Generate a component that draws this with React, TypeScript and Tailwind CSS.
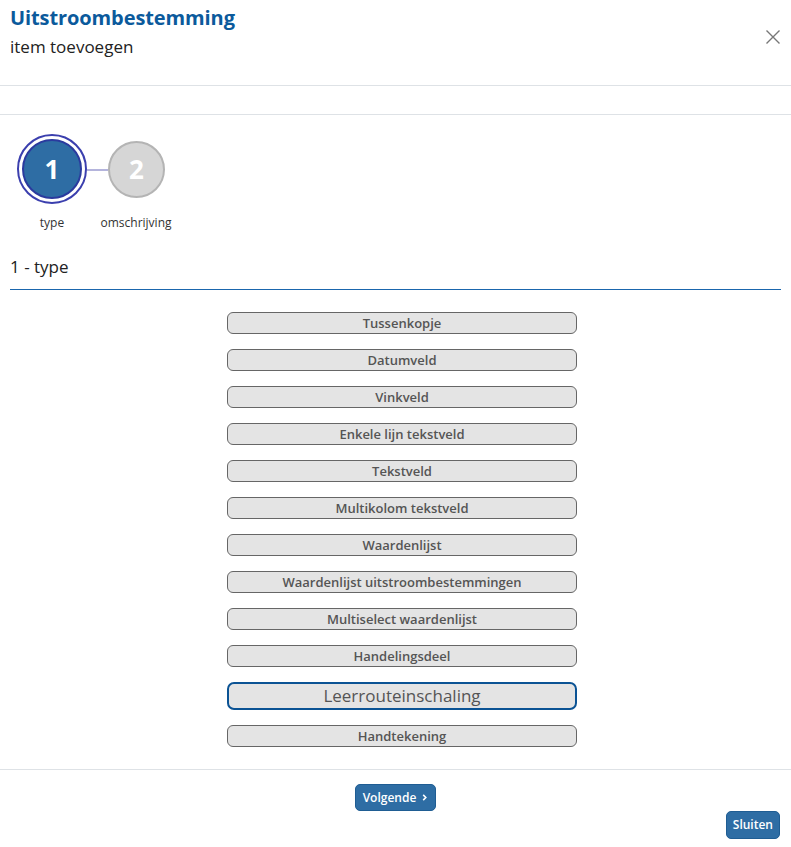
import React from 'react';

const items = [
  'Tussenkopje',
  'Datumveld',
  'Vinkveld',
  'Enkele lijn tekstveld',
  'Tekstveld',
  'Multikolom tekstveld',
  'Waardenlijst',
  'Waardenlijst uitstroombestemmingen',
  'Multiselect waardenlijst',
  'Handelingsdeel',
  'Leerrouteinschaling',
  'Handtekening',
];

export default function App() {
  const selected = 'Leerrouteinschaling';

  return (
    <div className="relative w-[791px] h-[847px] bg-white font-['Open_Sans',sans-serif] text-[#212529]">
      {/* header */}
      <div className="h-[86px] border-b border-[#dee2e6] px-[10px] pt-[4px]">
        <h1 className="text-[20px] leading-[28px] font-bold text-[#0b5a9c] tracking-[-0.1px]">Uitstroombestemming</h1>
        <p className="text-[17px] leading-[30px] text-[#222]">item toevoegen</p>
      </div>
      <button className="absolute right-[10px] top-[29px] w-[16px] h-[16px] text-[#777]" title="Sluiten">
        <svg viewBox="0 0 16 16" className="w-[16px] h-[16px]" fill="none" stroke="currentColor" strokeWidth={1.4}>
          <path d="M1.5 1.5l13 13M14.5 1.5l-13 13" />
        </svg>
      </button>
      <div className="h-[29px] border-b border-[#dee2e6]" />

      {/* body */}
      <div className="px-[10px] pt-[19px]">
        <div className="flex items-start pl-[7px]">
          <div className="flex flex-col items-center">
            <div className="w-[70px] h-[70px] rounded-full border-2 border-[#3b3fae] p-[3px]">
              <div className="w-full h-full rounded-full border-2 border-[#2a3a9e] bg-[#2e6da4] flex items-center justify-center text-white text-[26px] font-bold">
                1
              </div>
            </div>
          </div>
          <div className="w-[21px] h-[2px] bg-[#b4b4dc] mt-[35px]" />
          <div className="flex flex-col items-center pt-[7px]">
            <div className="w-[57px] h-[57px] rounded-full border-2 border-[#b4b4b4] bg-[#d6d6d6] flex items-center justify-center text-white text-[26px] font-bold">
              2
            </div>
          </div>
        </div>
        <div className="flex text-[12px] leading-[16px] text-[#333] mt-[11px]">
          <span className="w-[84px] text-center">type</span>
          <span className="w-[84px] text-center">omschrijving</span>
        </div>

        <h2 className="mt-[25px] text-[17px] leading-[22px] text-[#222] pb-[11px]">1 - type</h2>
        <div className="h-[1px] bg-[#1a66ad]" />

        <div className="flex flex-col gap-[15px] pt-[22px] pl-[217px]">
          {items.map((item) =>
            item === selected ? (
              <button
                key={item}
                className="w-[350px] h-[28px] rounded-[7px] border-2 border-[#0b5394] bg-[#e4e4e4] text-[17px] leading-[24px] text-[#555]"
              >
                {item}
              </button>
            ) : (
              <button
                key={item}
                className="w-[350px] h-[22px] rounded-[6px] border border-[#666] bg-[#e4e4e4] text-[13px] leading-[20px] font-semibold text-[#555]"
              >
                {item}
              </button>
            ),
          )}
        </div>
      </div>

      {/* footer */}
      <div className="absolute left-0 right-0 top-[769px] border-t border-[#dee2e6]">
        <div className="flex justify-center pt-[14px]">
          <button className="h-[27px] px-[7px] rounded-[5px] bg-[#2e6da4] border border-[#1f5d93] text-white text-[12px] font-semibold flex items-center gap-[5px]">
            Volgende
            <svg viewBox="0 0 8 8" className="w-[7px] h-[7px]" fill="none" stroke="currentColor" strokeWidth={1.8}>
              <path d="M2.5 1l3 3-3 3" />
            </svg>
          </button>
        </div>
        <div className="flex justify-end pr-[11px]">
          <button className="h-[28px] px-[6px] rounded-[5px] bg-[#2e6da4] border border-[#1f5d93] text-white text-[12px] font-semibold">
            Sluiten
          </button>
        </div>
      </div>
    </div>
  );
}
